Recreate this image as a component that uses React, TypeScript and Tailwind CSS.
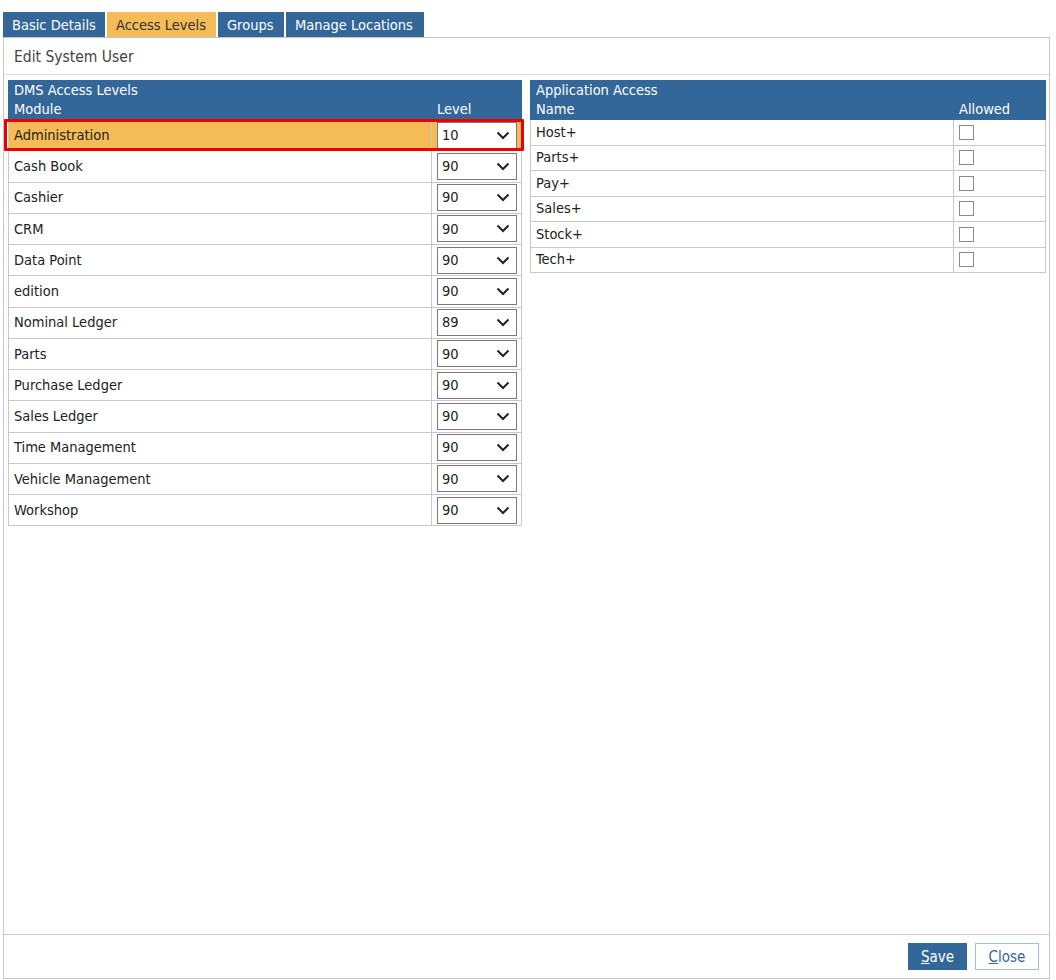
import React from "react";

const modules: [string, string][] = [
  ["Administration", "10"],
  ["Cash Book", "90"],
  ["Cashier", "90"],
  ["CRM", "90"],
  ["Data Point", "90"],
  ["edition", "90"],
  ["Nominal Ledger", "89"],
  ["Parts", "90"],
  ["Purchase Ledger", "90"],
  ["Sales Ledger", "90"],
  ["Time Management", "90"],
  ["Vehicle Management", "90"],
  ["Workshop", "90"],
];

const apps = ["Host+", "Parts+", "Pay+", "Sales+", "Stock+", "Tech+"];

function Chevron() {
  return (
    <svg width="14" height="9" viewBox="0 0 14 9" className="shrink-0">
      <path d="M1.5 1.5 L7 7 L12.5 1.5" fill="none" stroke="#222" strokeWidth="2" />
    </svg>
  );
}

function Select({ value }: { value: string }) {
  return (
    <div className="w-[80px] h-[27px] border border-[#7a7a7a] bg-white flex items-center justify-between pl-[4px] pr-[6px] text-[#222]">
      <span className="pt-[1px]">{value}</span>
      <Chevron />
    </div>
  );
}

export default function App() {
  return (
    <div
      className="w-[1056px] h-[980px] bg-white text-[14.5px] text-[#333] pt-[12px] pl-[3px]"
      style={{ fontFamily: '"DejaVu Sans Condensed", "DejaVu Sans", Verdana, sans-serif' }}
    >
      <div className="flex gap-[2px] h-[25px]">
        <div className="bg-[#336699] text-white px-[9px] pt-[2px] flex items-center w-[102px]">Basic Details</div>
        <div className="bg-[#f5bb57] text-[#333] px-[9px] pt-[2px] flex items-center w-[109px]">Access Levels</div>
        <div className="bg-[#336699] text-white px-[9px] pt-[2px] flex items-center w-[66px]">Groups</div>
        <div className="bg-[#336699] text-white px-[9px] pt-[2px] flex items-center w-[138px]">Manage Locations</div>
      </div>
      <div className="w-[1047px] h-[942px] border border-[#c6c6c6] flex flex-col">
        <div className="h-[37px] shrink-0 border-b border-[#dcdcdc] flex items-center pl-[10px] pt-[3px] text-[15.5px] text-[#444]">
          Edit System User
        </div>
        <div className="flex-1 flex items-start gap-[8px] pl-[4px] pt-[5px]">
          {/* Left table */}
          <div className="w-[514px]">
            <div className="bg-[#336699] text-white h-[40px] flex flex-col pl-[6px] pt-[1px] leading-[19px]">
              <div>DMS Access Levels</div>
              <div className="flex">
                <div className="w-[423px]">Module</div>
                <div>Level</div>
              </div>
            </div>
            {modules.map(([name, lvl], i) => (
              <div
                key={name}
                className={`relative flex h-[31.25px] border-b border-l border-r border-[#c8c8c8] ${
                  i === 0 ? "bg-[#f5bb57]" : "bg-white"
                }`}
              >
                <div className="w-[423px] border-r border-[#c8c8c8] flex items-center pl-[5px] pt-[1px] text-[#222]">{name}</div>
                <div className="flex-1 flex items-center pl-[5px]">
                  <Select value={lvl} />
                </div>
                {i === 0 && (
                  <div className="absolute left-[-5px] right-[-3px] top-[-1px] bottom-[-1px] border-[3px] border-[#ee0000] rounded-[1px] pointer-events-none" />
                )}
              </div>
            ))}
          </div>
          {/* Right table */}
          <div className="w-[516px]">
            <div className="bg-[#336699] text-white h-[40px] flex flex-col pl-[6px] pt-[1px] leading-[19px]">
              <div>Application Access</div>
              <div className="flex">
                <div className="w-[423px]">Name</div>
                <div>Allowed</div>
              </div>
            </div>
            {apps.map((a) => (
              <div key={a} className="flex h-[25.5px] border-b border-l border-r border-[#c8c8c8] bg-white">
                <div className="w-[423px] border-r border-[#c8c8c8] flex items-center pl-[5px] pt-[1px] text-[#222]">{a}</div>
                <div className="flex-1 flex items-center pl-[5px]">
                  <div className="w-[15px] h-[15px] border border-[#8a8a8a] bg-white" />
                </div>
              </div>
            ))}
          </div>
        </div>
        <div className="h-[44px] shrink-0 border-t border-[#c6c6c6] flex items-start justify-end gap-[8px] pt-[8px] pr-[10px]">
          <button className="w-[59px] h-[27px] bg-[#336699] text-white text-[15px] pt-[1px]">
            <span className="underline">S</span>ave
          </button>
          <button className="w-[64px] h-[27px] bg-white border border-[#9cc0e6] text-[#336699] text-[15px] pt-[1px]">
            <span className="underline">C</span>lose
          </button>
        </div>
      </div>
    </div>
  );
}
